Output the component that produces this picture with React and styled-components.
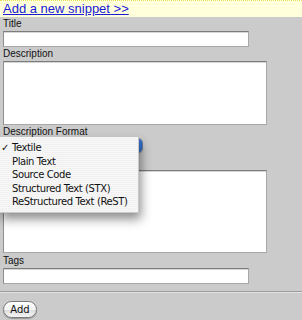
import React from "react";
import styled, { createGlobalStyle } from "styled-components";

const Global = createGlobalStyle`
  html, body { margin: 0; padding: 0; }
  body {
    background: #cbcbcb;
    font-family: "Liberation Sans", Arial, sans-serif;
    width: 302px;
    height: 320px;
    overflow: hidden;
  }
`;

const TopBar = styled.div`
  height: 16px;
  background: #ffffdc;
  border-top: 1px dotted #e6df5a;
  padding-left: 3px;
  display: flex;
  align-items: center;
`;

const TopLink = styled.a`
  font-size: 13px;
  line-height: 16px;
  color: #1a1ad8;
  text-decoration: underline;
`;

const Form = styled.form`
  padding: 0 0 0 3px;
  display: flex;
  flex-direction: column;
  align-items: flex-start;
`;

const Label = styled.label`
  display: block;
  font-size: 10px;
  line-height: ${(p) => p.$h || 14}px;
  color: #111;
`;

const TextInput = styled.input`
  display: block;
  box-sizing: border-box;
  width: 246px;
  height: 16px;
  margin: 0;
  padding: 0 2px;
  background: #fff;
  border: 1px solid #a8a8a8;
  border-top-color: #7c7c7c;
  border-left-color: #8e8e8e;
  box-shadow: inset 0 1px 0 #d6d6d6;
  outline: none;
`;

const TextArea = styled.textarea`
  display: block;
  box-sizing: border-box;
  width: 264px;
  height: ${(p) => p.$h}px;
  margin: ${(p) => p.$mt || 0}px 0 0 0;
  padding: 2px;
  resize: none;
  background: #fff;
  border: 1px solid #a8a8a8;
  border-top-color: #7c7c7c;
  border-left-color: #8e8e8e;
  box-shadow: inset 0 1px 0 #d6d6d6;
  outline: none;
`;

const SelectWrap = styled.div`
  position: relative;
  width: 140px;
  height: 16px;
`;

const SelectButton = styled.div`
  box-sizing: border-box;
  width: 140px;
  height: 15px;
  border-radius: 5px;
  background: linear-gradient(to right, #e8e8e8 0, #e8e8e8 122px, #6d9be0 124px, #2f6fd2 100%);
  border: 1px solid #6b7fa6;
  box-shadow: 0 1px 1px rgba(0, 0, 0, 0.2);
`;

const Menu = styled.ul`
  position: absolute;
  left: -4px;
  top: -1px;
  width: 138px;
  margin: 0;
  padding: 4px 0 3px 0;
  list-style: none;
  background: repeating-linear-gradient(
    to bottom,
    #f7f7f7 0,
    #f7f7f7 1px,
    #f1f1f1 1px,
    #f1f1f1 2px
  );
  border: 1px solid #c8c8c8;
  border-top: none;
  box-shadow: 2px 6px 10px rgba(0, 0, 0, 0.45);
  font-family: "DejaVu Sans", "Lucida Grande", sans-serif;
  font-size: 10px;
  letter-spacing: -0.4px;
  color: #111;
  z-index: 5;
`;

const MenuItem = styled.li`
  position: relative;
  height: 13.5px;
  line-height: 13.5px;
  padding-left: 12px;
  white-space: nowrap;
`;

const Check = styled.span`
  position: absolute;
  left: 1px;
  top: 0;
  font-size: 10px;
`;

const Divider = styled.div`
  align-self: stretch;
  margin: 7px 0 8px -3px;
  height: 1px;
  background: #9c9c9c;
  border-bottom: 1px solid #e2e2e2;
`;

const AddButton = styled.button`
  box-sizing: border-box;
  width: 34px;
  height: 17px;
  padding: 0;
  border-radius: 9px;
  border: 1px solid #7a7a7a;
  background: linear-gradient(to bottom, #ffffff 0%, #f2f2f2 50%, #dcdcdc 51%, #f4f4f4 100%);
  box-shadow: 0 1px 1px rgba(0, 0, 0, 0.25);
  font-family: "DejaVu Sans", "Lucida Grande", sans-serif;
  font-size: 10px;
  color: #111;
`;

const items = [
  "Textile",
  "Plain Text",
  "Source Code",
  "Structured Text (STX)",
  "ReStructured Text (ReST)",
];

export default function App() {
  return (
    <>
      <Global />
      <TopBar>
        <TopLink href="#">Add a new snippet &gt;&gt;</TopLink>
      </TopBar>
      <Form onSubmit={(e) => e.preventDefault()}>
        <Label>Title</Label>
        <TextInput type="text" />
        <Label>Description</Label>
        <TextArea $h={64} />
        <Label $h={13}>Description Format</Label>
        <SelectWrap>
          <SelectButton />
          <Menu>
            {items.map((it, i) => (
              <MenuItem key={it}>
                {i === 0 && <Check>✓</Check>}
                {it}
              </MenuItem>
            ))}
          </Menu>
        </SelectWrap>
        <TextArea $h={83} $mt={16} />
        <Label $h={15}>Tags</Label>
        <TextInput type="text" />
        <Divider />
        <AddButton type="submit">Add</AddButton>
      </Form>
    </>
  );
}
